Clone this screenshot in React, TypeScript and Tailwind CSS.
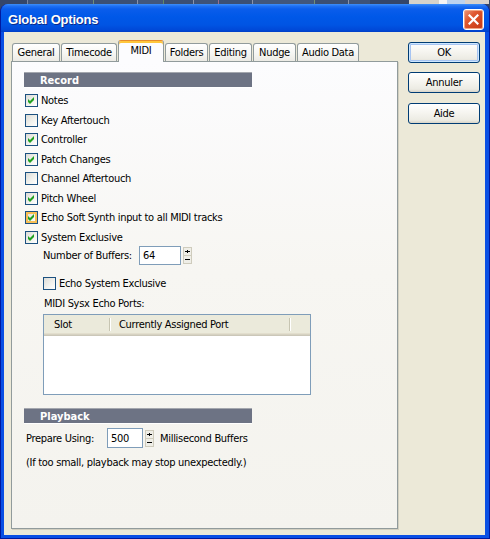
import React from 'react';

const Box = ({ checked, hot }: { checked?: boolean; hot?: boolean }) => (
  <span
    className={`flex items-center justify-center w-[13px] h-[13px] shrink-0 border border-[#1c5180] bg-[linear-gradient(135deg,#dcdcd7_0%,#f3f3ef_60%,#ffffff_100%)] ${
      hot ? 'shadow-[inset_0_0_0_2px_#f8bf55]' : ''
    }`}
  >
    {checked && (
      <svg width="7" height="7" viewBox="0 0 7 7" className="block">
        <polygon points="0,2 2,4 6,0 6,3 2,7 0,5" fill="#21a121" />
      </svg>
    )}
  </span>
);

const Row = ({ label, checked, hot }: { label: string; checked?: boolean; hot?: boolean }) => (
  <div className="flex items-center h-[19.5px] pl-[1px]">
    <Box checked={checked} hot={hot} />
    <span className="ml-[3px]">{label}</span>
  </div>
);

const Band = ({ children }: { children: React.ReactNode }) => (
  <div className="flex items-center w-[228px] h-[15px] pl-[16px] bg-[#6d7384] border-t border-[#a4a7ae] shadow-[0_1px_0_#ffffff] text-white font-bold leading-none tracking-normal">
    {children}
  </div>
);

const Spin = () => (
  <div className="flex flex-col w-[9px] h-[17px] ml-[2px]">
    <span className="flex-1 flex items-center justify-center bg-[#efeee7] border border-[#cfccbd]">
      <svg width="5" height="3" viewBox="0 0 5 3" className="block">
        <rect x="2" y="0" width="1" height="3" fill="#000" />
        <rect x="0" y="1" width="5" height="1" fill="#000" />
      </svg>
    </span>
    <span className="flex-1 flex items-center justify-center bg-[#efeee7] border border-t-0 border-[#cfccbd]">
      <svg width="5" height="1" viewBox="0 0 5 1" className="block">
        <rect x="0" y="0" width="5" height="1" fill="#000" />
      </svg>
    </span>
  </div>
);

const Btn = ({ children, def }: { children: React.ReactNode; def?: boolean }) => (
  <div
    className={`flex items-center justify-center w-[72px] h-[21px] rounded-[3px] border border-[#003c74] bg-[linear-gradient(to_bottom,#ffffff_0%,#f6f5f0_45%,#ecebe3_85%,#d8d4c8_100%)] ${
      def ? 'shadow-[inset_0_0_0_1px_#cee7ff,inset_0_0_0_2px_#a6c4f2]' : ''
    }`}
  >
    {children}
  </div>
);

const tabs = [
  { name: 'General', w: 'w-[48px]' },
  { name: 'Timecode', w: 'w-[56px]' },
  { name: 'MIDI', w: 'w-[46px]', sel: true },
  { name: 'Folders', w: 'w-[43px]' },
  { name: 'Editing', w: 'w-[43px]' },
  { name: 'Nudge', w: 'w-[43px]' },
  { name: 'Audio Data', w: 'w-[62px]' },
];

const strip = [
  'w-[27px] bg-[#34466a]',
  'w-[1px] bg-[#7a86a0]',
  'w-[65px] bg-[#3e5378]',
  'w-[1px] bg-[#6f8f7a]',
  'w-[43px] bg-[#3b5074]',
  'w-[1px] bg-[#8a94aa]',
  'w-[25px] bg-[#41577c]',
  'w-[1px] bg-[#5f8a6a]',
  'w-[29px] bg-[#3b4f73]',
  'w-[1px] bg-[#8a94aa]',
  'w-[24px] bg-[#3e5378]',
  'w-[1px] bg-[#9a7090]',
  'w-[33px] bg-[#3b5074]',
  'w-[1px] bg-[#8a94aa]',
  'w-[61px] bg-[#41577c]',
  'w-[1px] bg-[#6f8f7a]',
  'w-[33px] bg-[#3b4f73]',
  'w-[1px] bg-[#8a94aa]',
  'w-[21px] bg-[#3e5378]',
  'w-[39px] bg-[#34466a]',
  'w-[30px] bg-[#d6d3ca]',
  'w-[8px] bg-[#f4f4f4]',
  'w-[18px] bg-[#bcd3ef]',
  'w-[24px] bg-[#d8d2cc]',
];

export default function App() {
  return (
    <div className="w-[490px] h-[539px] bg-[#34466a] font-['DejaVu_Sans_Condensed','Liberation_Sans',sans-serif] text-[11px] leading-[13px] tracking-[-0.3px] text-black overflow-hidden">
      <div className="flex h-[4px]">
        {strip.map((c, i) => (
          <div key={i} className={`h-full shrink-0 ${c}`} />
        ))}
      </div>

      <div className="w-[490px] h-[535px] rounded-t-[8px] overflow-hidden border-x border-b border-[#0019a0] bg-[#0a4fe4] flex flex-col">
        {/* title bar */}
        <div className="h-[28px] shrink-0 flex items-start justify-between pl-[7px] pr-[5px] bg-[linear-gradient(to_bottom,#3d8ff9_0%,#1e6ff2_8%,#0a5deb_18%,#0058e8_45%,#0054e3_75%,#0049d8_92%,#003ec6_100%)]">
          <span className="mt-[8px] text-white font-bold text-[13px] leading-[15px] tracking-[-0.2px] font-['Liberation_Sans',sans-serif] [text-shadow:1px_1px_0_#0b2a8a]">
            Global Options
          </span>
          <span className="mt-[5px] flex items-center justify-center w-[21px] h-[21px] rounded-[3px] border border-white bg-[linear-gradient(135deg,#ec9a7c_0%,#e05a32_35%,#d2451e_70%,#c23a18_100%)] shadow-[inset_0_0_0_1px_#f0a585]">
            <svg width="11" height="11" viewBox="0 0 11 11" className="block">
              <path d="M1.5 1.5 L9.5 9.5 M9.5 1.5 L1.5 9.5" stroke="#ffffff" strokeWidth="2.2" strokeLinecap="square" />
            </svg>
          </span>
        </div>

        {/* client */}
        <div className="flex-1 ml-[3px] mr-[4px] mb-[3px] bg-[#ece9d8] flex gap-[10px] pl-[7px] pt-[8px] pb-[6px] pr-[5px]">
          <div className="w-[387px] flex flex-col">
            <div className="h-[21px] flex items-end gap-[1px] pl-[1px]">
              {tabs.map((t) =>
                t.sel ? (
                  <div
                    key={t.name}
                    className={`relative z-10 -mb-px h-[22px] ${t.w} flex items-center justify-center pb-[2px] rounded-t-[3px] bg-[#fcfcfe] border-x border-t border-x-[#919b9c] border-t-[#e68b2c] shadow-[inset_0_2px_0_#ffc73c]`}
                  >
                    {t.name}
                  </div>
                ) : (
                  <div
                    key={t.name}
                    className={`h-[18px] ${t.w} flex items-center justify-center rounded-t-[3px] border-x border-t border-[#919b9c] bg-[linear-gradient(to_bottom,#ffffff_0%,#f7f7f4_50%,#ecebe5_100%)]`}
                  >
                    {t.name}
                  </div>
                )
              )}
            </div>

            <div className="flex-1 border border-[#919b9c] shadow-[1px_1px_0_#d2cfc0] bg-[linear-gradient(to_bottom,#fcfcfe_0%,#f7f6f2_45%,#f4f3ee_100%)] pt-[10px] pl-[12px]">
              <Band>Record</Band>
              <div className="mt-[4px]">
                <Row label="Notes" checked />
                <Row label="Key Aftertouch" />
                <Row label="Controller" checked />
                <Row label="Patch Changes" checked />
                <Row label="Channel Aftertouch" />
                <Row label="Pitch Wheel" checked />
                <Row label="Echo Soft Synth input to all MIDI tracks" checked hot />
                <Row label="System Exclusive" checked />
              </div>

              <div className="-mt-px flex items-center h-[19px] pl-[19px]">
                <span className="w-[96px]">Number of Buffers:</span>
                <div className="w-[42px] h-[19px] border border-[#7f9db9] bg-white flex items-center pl-[3px]">64</div>
                <Spin />
              </div>

              <div className="mt-[12px] flex items-center h-[13px] pl-[19px]">
                <Box />
                <span className="ml-[3px]">Echo System Exclusive</span>
              </div>

              <div className="mt-[7px] pl-[20px]">MIDI Sysx Echo Ports:</div>

              <div className="mt-[4px] ml-[19px] w-[268px] h-[81px] border border-[#7f9db9] bg-white">
                <div className="h-[21px] flex items-center bg-[#ebeadb] shadow-[inset_0_-1px_0_#cbc7b8,inset_0_-2px_0_#d6d2c2,inset_0_-3px_0_#e2decd] pb-[2px]">
                  <span className="w-[65px] pl-[10px]">Slot</span>
                  <span className="w-px h-[13px] bg-[#c7c5b2] shadow-[1px_0_0_#ffffff]" />
                  <span className="w-[179px] pl-[9px]">Currently Assigned Port</span>
                  <span className="w-px h-[13px] bg-[#c7c5b2] shadow-[1px_0_0_#ffffff]" />
                </div>
              </div>

              <div className="mt-[13px]">
                <Band>Playback</Band>
              </div>

              <div className="mt-[5px] flex items-center h-[20px] pl-[2px]">
                <span className="w-[81px]">Prepare Using:</span>
                <div className="w-[36px] h-[20px] border border-[#7f9db9] bg-white flex items-center pl-[3px]">500</div>
                <Spin />
                <span className="ml-[6px]">Millisecond Buffers</span>
              </div>

              <div className="mt-[8px] pl-[2px]">(If too small, playback may stop unexpectedly.)</div>
            </div>
          </div>

          <div className="w-[72px] flex flex-col pt-[2px]">
            <Btn def>OK</Btn>
            <div className="mt-[9px]">
              <Btn>Annuler</Btn>
            </div>
            <div className="mt-[10px]">
              <Btn>Aide</Btn>
            </div>
          </div>
        </div>
      </div>
    </div>
  );
}
